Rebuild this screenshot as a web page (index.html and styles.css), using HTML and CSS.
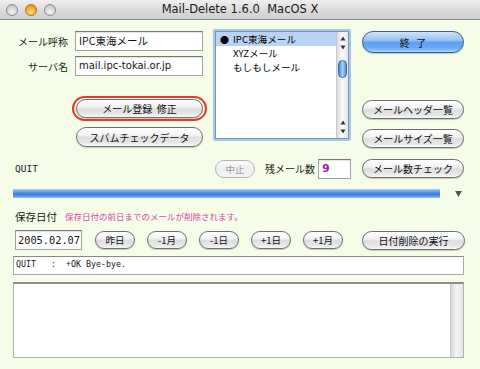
FILE: index.html
```html
<!DOCTYPE html>
<html lang="ja">
<head>
<meta charset="utf-8">
<title>Mail-Delete</title>
<link rel="stylesheet" href="styles.css">
</head>
<body>
<div class="window">
  <div class="titlebar">
    <div class="lights">
      <span class="light gray"></span>
      <span class="light orange"></span>
      <span class="light gray"></span>
    </div>
    <div class="title">Mail-Delete 1.6.0  MacOS X</div>
  </div>

  <div class="top">
    <div class="left-area">
      <div class="upper">
        <div class="form">
          <div class="fields">
            <span class="lbl">メール呼称</span><div class="field">IPC東海メール</div>
            <span class="lbl">サーバ名</span><div class="field latin">mail.ipc-tokai.or.jp</div>
          </div>
          <div class="ring"><div class="btn wide">メール登録&nbsp;&nbsp;修正</div></div>
          <div class="btn wide spam">スパムチェックデータ</div>
        </div>
        <div class="list">
          <div class="list-inner">
            <div class="list-items">
              <div class="item sel"><span class="dot">●</span>IPC東海メール</div>
              <div class="item">XYZメール</div>
              <div class="item">もしもしメール</div>
            </div>
            <div class="vscroll">
              <div class="arrows">
                <svg class="arr" viewBox="0 0 7 6"><path d="M3.5 0.5 L6.5 5.5 L0.5 5.5 Z"/></svg>
                <svg class="arr" viewBox="0 0 7 6"><path d="M0.5 0.5 L6.5 0.5 L3.5 5.5 Z"/></svg>
              </div>
              <div class="track"><div class="thumb"></div></div>
              <div class="arrows">
                <svg class="arr" viewBox="0 0 7 6"><path d="M3.5 0.5 L6.5 5.5 L0.5 5.5 Z"/></svg>
                <svg class="arr" viewBox="0 0 7 6"><path d="M0.5 0.5 L6.5 0.5 L3.5 5.5 Z"/></svg>
              </div>
            </div>
          </div>
        </div>
      </div>
      <div class="quit-row">
        <span class="mono status">QUIT</span>
        <div class="btn small disabled">中止</div>
        <span class="lbl remain">残メール数</span>
        <div class="field count">9</div>
      </div>
    </div>

    <div class="right">
      <div class="btn blue quit">終&nbsp;&nbsp;&nbsp;了</div>
      <div class="btn side first">メールヘッダ一覧</div>
      <div class="btn side">メールサイズ一覧</div>
      <div class="btn side last">メール数チェック</div>
    </div>
  </div>

  <div class="progress-row">
    <div class="progress"></div>
    <svg class="disclose" viewBox="0 0 8 7"><path d="M0 0 L8 0 L4 7 Z"/></svg>
  </div>

  <div class="date-head">
    <span class="date-lbl">保存日付</span>
    <span class="hint">保存日付の前日までのメールが削除されます。</span>
  </div>

  <div class="date-row">
    <div class="field date mono">2005.02.07</div>
    <div class="btn small">昨日</div>
    <div class="btn small">-1月</div>
    <div class="btn small">-1日</div>
    <div class="btn small">+1日</div>
    <div class="btn small">+1月</div>
    <div class="btn exec">日付削除の実行</div>
  </div>

  <div class="logline mono">QUIT   :  +OK Bye-bye.</div>

  <div class="textarea">
    <div class="ta-body"></div>
    <div class="ta-scroll"></div>
  </div>
</div>
</body>
</html>
```

FILE: styles.css
```css
* { box-sizing: border-box; }
html, body { margin: 0; padding: 0; }
body {
  width: 480px;
  height: 369px;
  overflow: hidden;
  background: #f5fde8;
  font-family: "Noto Sans CJK JP", "DejaVu Sans", sans-serif;
  font-size: 10px;
  color: #151515;
}
.window { width: 480px; height: 369px; }
.mono { font-family: "DejaVu Sans Mono", "Noto Sans CJK JP", monospace; }

/* title bar */
.titlebar {
  display: grid;
  height: 20px;
  border-bottom: 1px solid #8d8d8d;
  background: linear-gradient(#efefef, #d9d9d9 60%, #cfcfcf);
}
.lights, .title { grid-area: 1 / 1; }
.lights { display: flex; gap: 7px; padding-left: 6px; align-items: center; }
.light {
  width: 12px; height: 12px; border-radius: 50%;
  border: 1px solid #8e8e8e;
}
.light.gray { background: radial-gradient(circle at 50% 70%, #f2f2f2 0%, #d6d6d6 55%, #b4b4b4 100%); }
.light.orange {
  border-color: #b6701a;
  background: radial-gradient(circle at 50% 75%, #ffe08a 0%, #f7b02d 50%, #d77f10 100%);
}
.title {
  text-align: center;
  font-family: "DejaVu Sans", sans-serif;
  font-size: 11.5px;
  line-height: 19px;
  color: #1a1a1a;
  white-space: pre;
}

/* top area */
.top { display: flex; }
.left-area { width: 351px; display: flex; flex-direction: column; }
.upper { display: flex; }
.form { width: 213px; padding-top: 11px; }
.fields {
  display: grid;
  grid-template-columns: 68px 128px;
  column-gap: 7px;
  row-gap: 5px;
  align-items: center;
}
.lbl { text-align: right; font-size: 10px; color: #222; }
.field {
  height: 20px;
  background: #fff;
  border: 1px solid #a2a2a2;
  border-top-color: #777;
  box-shadow: inset 0 1px 1px rgba(0,0,0,0.12);
  padding-left: 3px;
  font-size: 10.5px;
  line-height: 18px;
  white-space: nowrap;
  overflow: hidden;
}
.field.latin { font-family: "DejaVu Sans", sans-serif; font-size: 10px; }

/* buttons */
.btn {
  display: flex; align-items: center; justify-content: center;
  height: 19px;
  border: 1px solid #6f6f6f;
  border-radius: 10px;
  background: linear-gradient(#ffffff 0%, #f3f3f3 40%, #dedede 52%, #e6e6e6 80%, #f7f7f7 100%);
  box-shadow: 0 1px 1px rgba(0,0,0,0.2);
  font-size: 10px;
  color: #111;
  white-space: nowrap;
}
.btn.wide { width: 127px; }
.ring {
  margin: 20px 0 0 72px;
  width: 135px;
  border: 2px solid #e2392c;
  border-radius: 13px;
  padding: 1px 2px;
}
.btn.spam { margin: 6px 0 0 76px; height: 20px; }
.btn.small { width: 40px; height: 18px; font-size: 9.5px; }
.btn.disabled {
  color: #9a9a9a;
  border-color: #b4b4b4;
  background: linear-gradient(#fbfbfb, #efefef 50%, #f4f4f4);
  box-shadow: none;
}
.btn.blue {
  border-color: #3c5d91;
  background: linear-gradient(#cfe3fb 0%, #94c2f7 42%, #5d9ff0 52%, #69aaf5 80%, #a9d6fb 100%);
}

/* list */
.list {
  margin-top: 9px;
  width: 138px;
  height: 112px;
  border: 2px solid #a8c6ec;
  border-radius: 2px;
}
.list-inner {
  height: 100%;
  border: 1px solid #7b95bb;
  background: #fff;
  display: flex;
}
.list-items { flex: 1; padding-top: 0; }
.item {
  height: 14px;
  line-height: 14px;
  padding-left: 17px;
  font-size: 9.6px;
  color: #000;
  white-space: nowrap;
}
.item.sel { background: #b9d3f3; padding-left: 4px; }
.dot { display: inline-block; width: 13px; font-size: 9px; }
.vscroll {
  width: 12px;
  display: flex; flex-direction: column;
  background: linear-gradient(to right, #dcdcdc, #fafafa 50%, #e4e4e4);
  border-left: 1px solid #c8c8c8;
}
.arrows { display: flex; flex-direction: column; align-items: center; gap: 4px; padding: 4px 0; }
.arr { width: 6px; height: 5px; fill: #333; }
.track { flex: 1; padding: 6px 1px 0; }
.thumb {
  height: 18px;
  border-radius: 6px;
  border: 1px solid #3a67a8;
  background: linear-gradient(to right, #3f86e2, #a9d1fb 50%, #4d90e6);
}

/* quit row */
.quit-row {
  margin-top: 12px;
  height: 19px;
  display: flex; align-items: center;
  padding-left: 15px;
}
.status { flex: 1; font-size: 9.5px; }
.remain { margin-left: 10px; margin-right: 3px; }
.field.count {
  width: 33px;
  color: #a0289c;
  font-family: "DejaVu Sans", sans-serif;
  font-weight: bold;
  font-size: 11px;
}

/* right column */
.right { margin-left: 11px; width: 102px; padding-top: 11px; display: flex; flex-direction: column; }
.btn.quit { height: 22px; border-radius: 11px; }
.btn.side { margin-top: 10px; }
.btn.side.first { margin-top: 47px; }
.btn.side.last { margin-top: 11px; }

/* progress */
.progress-row {
  margin-top: 11px;
  display: flex; align-items: center;
  padding-left: 13px;
}
.progress {
  width: 427px; height: 9px;
  background: linear-gradient(#b6d2f4 0%, #6fa5ea 25%, #3b7ddb 55%, #4f8fe4 75%, #a3c8f2 100%);
}
.disclose { width: 7px; height: 6px; margin-left: 15px; fill: #555; }

/* date */
.date-head {
  margin-top: 11px;
  height: 14px;
  display: flex; align-items: center;
  padding-left: 15px;
}
.date-lbl { font-size: 10.5px; width: 50px; }
.hint { font-size: 8.5px; color: #d845a9; }
.date-row {
  margin-top: 7px;
  display: flex; align-items: center;
  gap: 12px;
  padding: 0 15px;
  height: 20px;
}
.field.date { width: 67px; font-size: 10.3px; padding-left: 2px; margin-right: 1px; }
.btn.exec { width: 103px; margin-left: auto; height: 19px; }

/* log */
.logline {
  margin: 6px 16px 0 13px;
  height: 19px;
  background: #fff;
  border: 1px solid #a7a7a7;
  border-top-color: #888;
  padding-left: 2px;
  font-size: 8.3px;
  line-height: 15px;
  white-space: pre;
}
.textarea {
  margin: 7px 16px 0 13px;
  height: 76px;
  display: flex;
  background: #fff;
  border: 1px solid #b0b0b0;
  border-top: 2px solid #8d8d8d;
}
.ta-body { flex: 1; }
.ta-scroll {
  width: 13px;
  background: linear-gradient(to right, #d8d8d8, #f4f4f4 45%, #e6e6e6);
  border-left: 1px solid #c6c6c6;
}
```
